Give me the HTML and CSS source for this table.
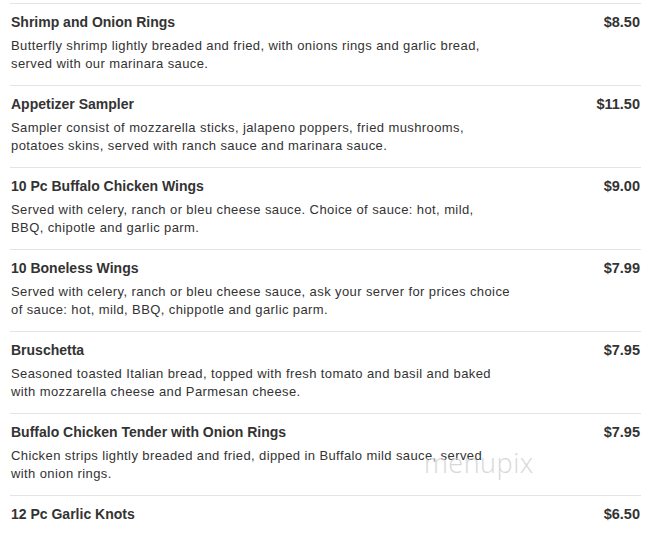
FILE: index.html
```html
<!DOCTYPE html>
<html>
<head>
<meta charset="utf-8">
<link rel="stylesheet" href="styles.css">
</head>
<body>
<div class="menu">
  <div class="item">
    <div class="row"><span class="name">Shrimp and Onion Rings</span><span class="price">$8.50</span></div>
    <p class="desc">Butterfly shrimp lightly breaded and fried, with onions rings and garlic bread,<br>served with our marinara sauce.</p>
  </div>
  <div class="item">
    <div class="row"><span class="name">Appetizer Sampler</span><span class="price">$11.50</span></div>
    <p class="desc">Sampler consist of mozzarella sticks, jalapeno poppers, fried mushrooms,<br>potatoes skins, served with ranch sauce and marinara sauce.</p>
  </div>
  <div class="item">
    <div class="row"><span class="name">10 Pc Buffalo Chicken Wings</span><span class="price">$9.00</span></div>
    <p class="desc">Served with celery, ranch or bleu cheese sauce. Choice of sauce: hot, mild,<br>BBQ, chipotle and garlic parm.</p>
  </div>
  <div class="item">
    <div class="row"><span class="name">10 Boneless Wings</span><span class="price">$7.99</span></div>
    <p class="desc">Served with celery, ranch or bleu cheese sauce, ask your server for prices choice<br>of sauce: hot, mild, BBQ, chippotle and garlic parm.</p>
  </div>
  <div class="item">
    <div class="row"><span class="name">Bruschetta</span><span class="price">$7.95</span></div>
    <p class="desc">Seasoned toasted Italian bread, topped with fresh tomato and basil and baked<br>with mozzarella cheese and Parmesan cheese.</p>
  </div>
  <div class="item">
    <div class="row"><span class="name">Buffalo Chicken Tender with Onion Rings</span><span class="price">$7.95</span></div>
    <p class="desc">Chicken strips lightly breaded and fried, dipped in Buffalo mild sauce, served<br>with onion rings.</p>
    <span class="watermark">menupix</span>
  </div>
  <div class="item last">
    <div class="row"><span class="name">12 Pc Garlic Knots</span><span class="price">$6.50</span></div>
  </div>
</div>
</body>
</html>
```
FILE: styles.css
```css
html, body {
  margin: 0;
  padding: 0;
  background: #ffffff;
}
body {
  font-family: "Liberation Sans", Arial, sans-serif;
  color: #333333;
}
.menu {
  width: 631px;
  margin-left: 10px;
  padding-top: 3px;
}
.item {
  position: relative;
  border-top: 1px solid #e4e4e4;
  padding: 8px 0 12px 1px;
  height: 61px;
}
.item.last {
  height: auto;
  padding-bottom: 8px;
}
.row {
  display: flex;
  justify-content: space-between;
  align-items: center;
  height: 20px;
}
.name {
  font-weight: bold;
  font-size: 14px;
  line-height: 20px;
}
.price {
  font-weight: bold;
  font-size: 14.5px;
  line-height: 20px;
  padding-right: 1px;
}
.desc {
  margin: 5px 0 0 0;
  font-size: 13px;
  line-height: 18px;
  letter-spacing: 0.4px;
}
.watermark {
  position: absolute;
  left: 414px;
  top: 30px;
  font-family: "Open Sans", sans-serif;
  font-weight: 300;
  font-size: 27px;
  letter-spacing: 0.5px;
  color: #cfcfcf;
  opacity: 0.8;
}
```
